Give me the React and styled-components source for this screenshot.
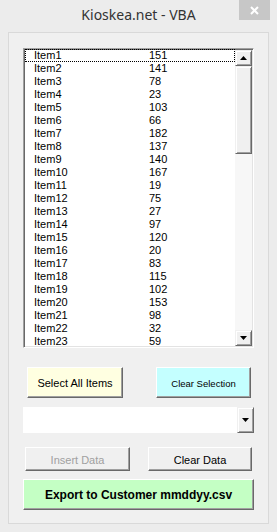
import React from "react";
import styled, { createGlobalStyle } from "styled-components";

const GlobalStyle = createGlobalStyle`
  html, body {
    margin: 0;
    padding: 0;
    background: #ececec;
  }
`;

const Window = styled.div`
  position: relative;
  width: 277px;
  height: 532px;
  box-sizing: border-box;
  background: #ececec;
  font-family: "Liberation Sans", Arial, sans-serif;
  display: flex;
  flex-direction: column;
`;

const TitleBar = styled.div`
  height: 32px;
  display: flex;
  align-items: flex-start;
  justify-content: center;
`;

const Title = styled.div`
  margin-top: 5px;
  font-family: "Noto Sans", "Open Sans", sans-serif;
  font-size: 14px;
  color: #333;
`;

const CloseButton = styled.div`
  position: absolute;
  top: 0;
  right: 7px;
  width: 31px;
  height: 20px;
  background: #c7c7c7;
  color: #fff;
  display: flex;
  align-items: center;
  justify-content: center;
`;

const Client = styled.div`
  margin-left: 8px;
  width: 261px;
  height: 492px;
  box-sizing: border-box;
  border: 1px solid #d9d9d9;
  background: #f0f0f0;
  padding: 15px 14px 0 14px;
  display: flex;
  flex-direction: column;
`;

const ListBox = styled.div`
  height: 300px;
  box-sizing: border-box;
  border: 1px solid;
  border-color: #a0a0a0 #fff #fff #a0a0a0;
  box-shadow: inset 1px 1px 0 #696969, inset -1px -1px 0 #e3e3e3;
  background: #fff;
  display: flex;
  overflow: hidden;
`;

const Rows = styled.div`
  flex: 1;
  overflow: hidden;
  padding-left: 1px;
`;

const Row = styled.div`
  height: 13px;
  box-sizing: border-box;
  display: grid;
  grid-template-columns: 115px 1fr;
  padding-left: 9px;
  font-size: 11px;
  line-height: 12px;
  color: #000;
  outline: ${(p) => (p.focused ? "1px dotted #000" : "none")};
  outline-offset: -1px;
`;

const ScrollBar = styled.div`
  width: 17px;
  margin: 1px 1px 1px 0;
  display: flex;
  flex-direction: column;
  background: #f7f7f7;
`;

const ScrollButton = styled.div`
  height: 16px;
  box-sizing: border-box;
  border: 1px solid;
  border-color: #f0f0f0 #696969 #696969 #f0f0f0;
  box-shadow: inset 1px 1px 0 #fff, inset -1px -1px 0 #a0a0a0;
  background: #f0f0f0;
  display: flex;
  align-items: center;
  justify-content: center;
`;

const Thumb = styled(ScrollButton)`
  height: 88px;
`;

const Track = styled.div`
  flex: 1;
`;

const Arrow = ({ up }) => (
  <svg width="7" height="4" viewBox="0 0 7 4">
    {up ? <path d="M3.5 0 L7 4 L0 4 Z" fill="#000" /> : <path d="M0 0 L7 0 L3.5 4 Z" fill="#000" />}
  </svg>
);

const ButtonRow = styled.div`
  display: flex;
  justify-content: space-between;
  margin-top: ${(p) => p.top}px;
  padding: 0 ${(p) => p.right}px 0 ${(p) => p.left}px;
`;

const Button = styled.div`
  width: ${(p) => p.w}px;
  height: ${(p) => p.h}px;
  box-sizing: border-box;
  border: 1px solid;
  border-color: #fff #696969 #696969 #fff;
  box-shadow: inset -1px -1px 0 #a0a0a0;
  background: ${(p) => p.bg || "#f0f0f0"};
  color: ${(p) => (p.disabled ? "#a0a0a0" : "#000")};
  font-size: ${(p) => p.size || 11}px;
  font-weight: ${(p) => (p.bold ? 700 : 400)};
  display: flex;
  align-items: center;
  justify-content: center;
  padding-top: 1px;
`;

const Combo = styled.div`
  margin-top: 9px;
  height: 26px;
  background: #fff;
  display: flex;
  justify-content: flex-end;
`;

const ComboButton = styled(ScrollButton)`
  width: 17px;
  height: 26px;
`;

const ExportButton = styled(Button)`
  width: 100%;
  margin-top: 8px;
`;

const items = [
  151, 141, 78, 23, 103, 66, 182, 137, 140, 167, 19, 75, 27, 97, 120, 20, 83,
  115, 102, 153, 98, 32, 59,
];

export default function App() {
  return (
    <>
      <GlobalStyle />
      <Window>
        <TitleBar>
          <Title>Kioskea.net - VBA</Title>
        </TitleBar>
        <CloseButton>
          <svg width="9" height="9" viewBox="0 0 9 9">
            <path d="M1 1 L8 8 M8 1 L1 8" stroke="#fff" strokeWidth="2" />
          </svg>
        </CloseButton>
        <Client>
          <ListBox>
            <Rows>
              {items.map((v, i) => (
                <Row key={i} focused={i === 0}>
                  <span>Item{i + 1}</span>
                  <span>{v}</span>
                </Row>
              ))}
            </Rows>
            <ScrollBar>
              <ScrollButton>
                <Arrow up />
              </ScrollButton>
              <Thumb />
              <Track />
              <ScrollButton>
                <Arrow />
              </ScrollButton>
            </ScrollBar>
          </ListBox>
          <ButtonRow top={19} left={4} right={3}>
            <Button w={96} h={31} bg="#ffffe1">
              Select All Items
            </Button>
            <Button w={95} h={31} bg="#c4ffff" size={9.5}>
              Clear Selection
            </Button>
          </ButtonRow>
          <Combo>
            <ComboButton>
              <Arrow />
            </ComboButton>
          </Combo>
          <ButtonRow top={14} left={2} right={2}>
            <Button w={105} h={24} disabled>
              Insert Data
            </Button>
            <Button w={104} h={24}>
              Clear Data
            </Button>
          </ButtonRow>
          <ExportButton h={31} bg="#c4ffc4" size={12} bold>
            Export to Customer mmddyy.csv
          </ExportButton>
        </Client>
      </Window>
    </>
  );
}
